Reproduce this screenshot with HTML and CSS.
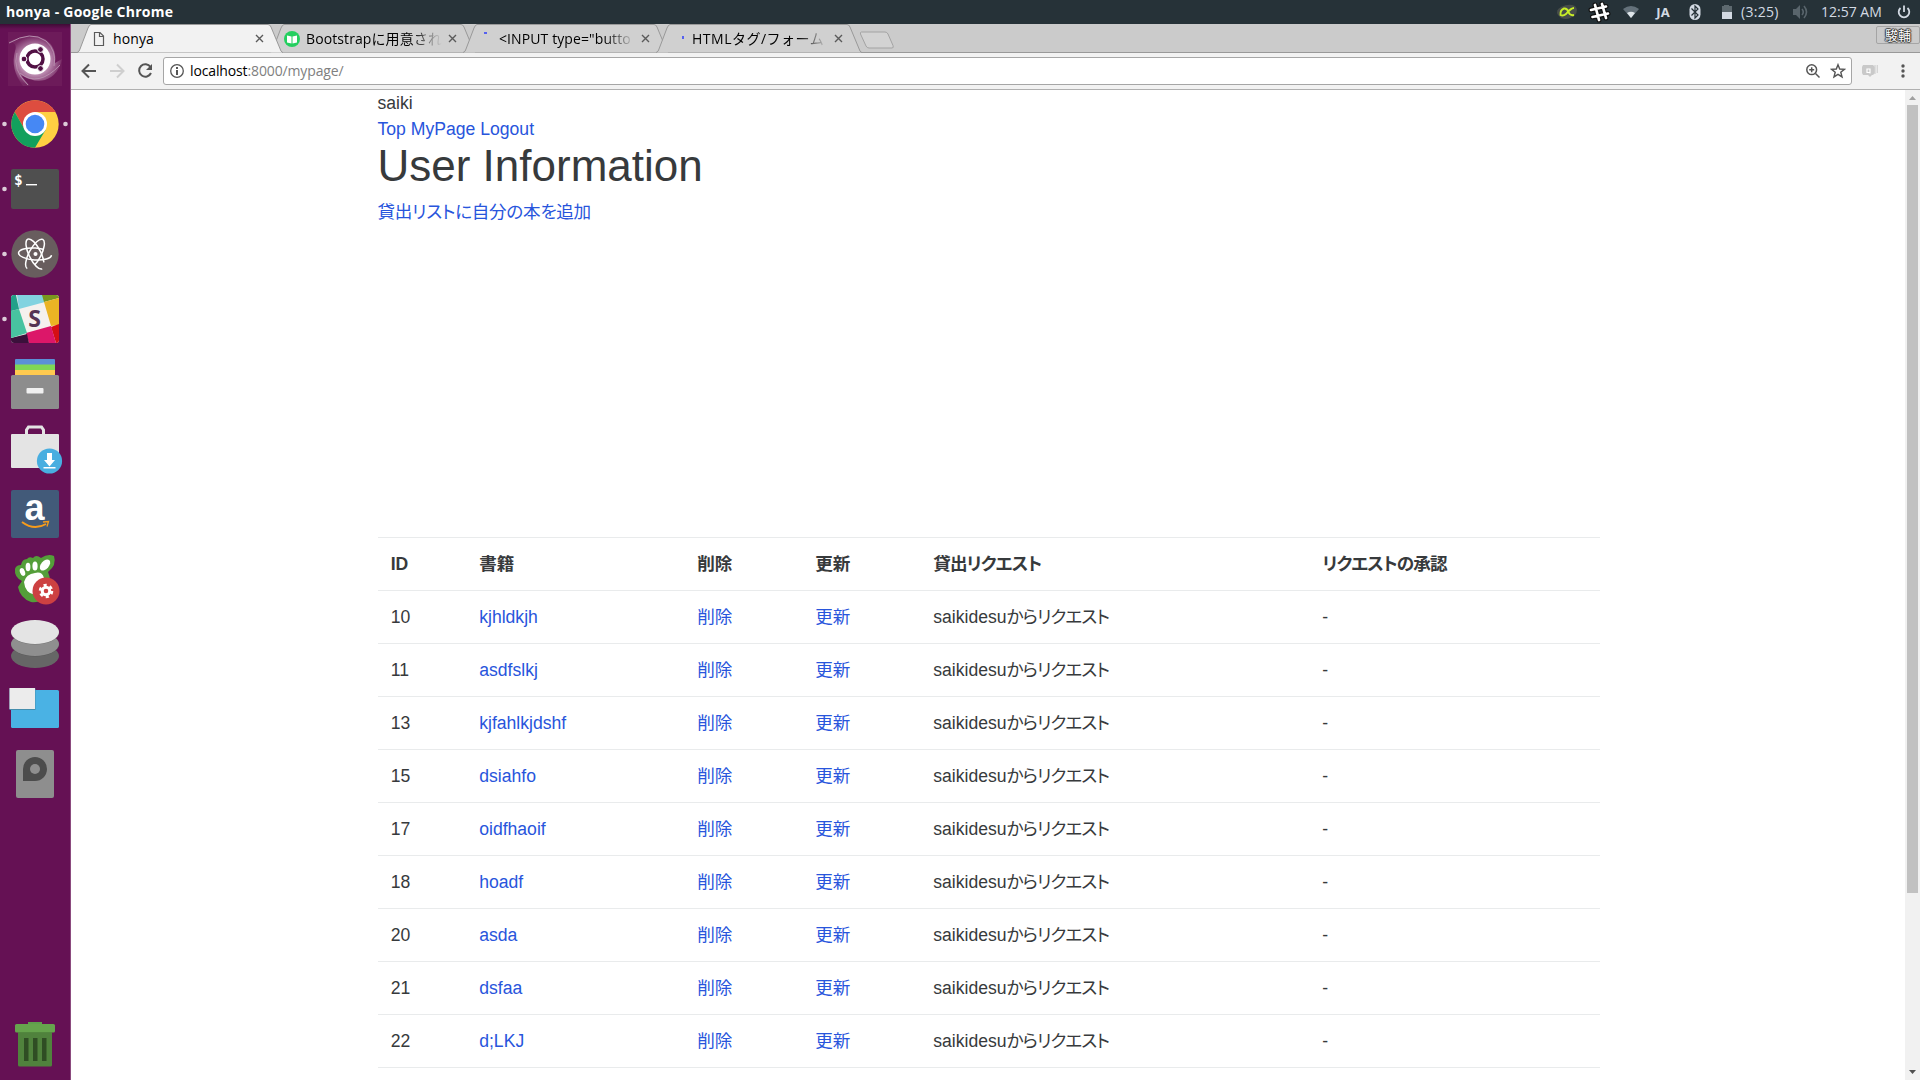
FILE: index.html
```html
<!DOCTYPE html>
<html lang="ja">
<head>
<meta charset="utf-8">
<title>honya</title>
<link rel="stylesheet" href="styles.css">
</head>
<body>
<header class="panel">
  <div class="window-title">honya - Google Chrome</div>
  <div class="indicators">
    <svg class="slot" viewBox="0 0 32 24"><path d="M7 15Q4 10 10 7Q18 3 24 6Q28 10 24 15Q17 21 10 18Z" fill="#474d49"/><path d="M23 8Q20 8 15 14Q12 16.500 9.500 15Q9 10 13 8.500Q16 8 17.500 12Q19 16 23 15" fill="none" stroke="#c8ee28" stroke-width="1.900"/></svg>
    <svg class="slot" viewBox="0 0 32 24"><g fill="none" stroke-linecap="round"><path d="M12 5L16 20M19 4L23 18M8 10L23 6.500M9.500 17L25 13.500" stroke="#111" stroke-width="5"/><path d="M12 5L16 20M19 4L23 18M8 10L23 6.500M9.500 17L25 13.500" stroke="#fff" stroke-width="2.700"/></g></svg>
    <svg class="slot" viewBox="0 0 32 24"><path d="M8 9Q16 3 24 9L16 18Z" fill="#64717a"/><path d="M12 13Q16 10.500 20 13L16 18Z" fill="#dfe6ea"/></svg>
    <div class="slot lang">JA</div>
    <svg class="slot" viewBox="0 0 32 24"><rect x="10.500" y="4" width="11" height="16" rx="5.500" fill="#d3dae3"/><path d="M12.500 8.500L19 15L16 18V6L19 9L12.500 15.500" fill="none" stroke="#263238" stroke-width="1.200"/></svg>
    <svg class="slot battery" viewBox="0 0 31 24"><path d="M13 5h5v1h3v6H11V6h2z" fill="#5d696f"/><path d="M11 12h10v7H11z" fill="#d3dae3"/></svg>
    <div class="remaining">(3:25)</div>
    <svg class="slot" viewBox="0 0 32 24"><path d="M9 9h3l4-4v14l-4-4H9z" fill="#59656c"/><path d="M18 9q2.500 3 0 6M20 6q5 6 0 12" fill="none" stroke="#59656c" stroke-width="1.600"/></svg>
    <div class="clock">12:57 AM</div>
    <svg class="slot" viewBox="0 0 32 24"><path d="M12.500 8A5.300 5.300 0 1 0 19.500 8M16 5.500V12" fill="none" stroke="#d3dae3" stroke-width="1.800"/></svg>
  </div>
</header>
<div class="desktop">
  <nav class="launcher">
    <svg viewBox="0 0 71 65"><defs><radialGradient id="dash"><stop offset=".5" stop-color="#c59abb"/><stop offset="1" stop-color="#762863"/></radialGradient></defs><rect x="8" y="5" width="54" height="54" fill="#6d1b5a"/><path d="M8 15Q30 5 45 12Q57 20 55 36L62 32Q59 48 45 53Q34 56 21 48Q25 54 30 59H23Q10 42 15 24Q18 15 8 15Z" fill="url(#dash)"/><path d="M9 16Q31 3 46 14Q57 24 54 39M17 26Q12 43 28 58M20 46Q38 61 60 38" fill="none" stroke="#b78eae"/><circle cx="35" cy="32" r="15.500" fill="#fff"/><circle cx="35" cy="32" r="8" fill="none" stroke="#511044" stroke-width="3.500"/><g fill="#511044" stroke="#fff"><circle cx="24" cy="32" r="2.900"/><circle cx="40.500" cy="22.500" r="2.900"/><circle cx="40.500" cy="41.500" r="2.900"/></g></svg>
    <svg viewBox="0 0 71 65"><circle class="run" cx="4.500" cy="32" r="2.300"/><circle class="run" cx="65.500" cy="32" r="2.300"/><circle cx="35" cy="32" r="23.700" fill="#ffd042"/><path d="M14.700 20A23.700 23.700 0 0 1 55.500 20H35L25 38Z" fill="#dd4d3f"/><path d="M14.700 20A23.700 23.700 0 0 0 35 55.700L45.500 38L35 32L25 38Z" fill="#12a05d"/><circle cx="35" cy="32" r="12" fill="#fff"/><circle cx="35" cy="32" r="9.300" fill="#4688f4"/></svg>
    <svg viewBox="0 0 71 65"><circle class="run" cx="4.500" cy="32" r="2.300"/><rect x="11" y="12" width="48" height="40" rx="2" fill="#4f4f4f"/><text class="prompt" x="14" y="28">$</text><path d="M26 27.700h11" stroke="#fff" stroke-width="1.400"/></svg>
    <svg viewBox="0 0 71 65"><circle class="run" cx="4.500" cy="32" r="2.300"/><circle cx="35" cy="32" r="23.700" fill="#685d5e"/><g fill="none" stroke="#fff" stroke-width="1.500"><ellipse cx="35" cy="32" rx="16.500" ry="6" transform="rotate(4 35 32)" stroke-dasharray="63 12"/><ellipse cx="35" cy="32" rx="16.500" ry="6" transform="rotate(64 35 32)" stroke-dasharray="67 8"/><ellipse cx="35" cy="32" rx="16.500" ry="6" transform="rotate(118 35 32)" stroke-dasharray="65 10"/></g><circle cx="35.500" cy="32" r="2" fill="#fff"/></svg>
    <svg viewBox="0 0 71 65"><defs><clipPath id="tile"><rect x="11" y="8" width="48" height="48" rx="3"/></clipPath></defs><circle class="run" cx="4.500" cy="32" r="2.300"/><g clip-path="url(#tile)"><path d="M11 8h48v48H11z" fill="#f5f1ee"/><path d="M17 8h26l2 7-26 7z" fill="#82d3e0"/><path d="M42 8h17v3l-15 4z" fill="#79971e"/><path d="M44 15l15-4v27l-8 1z" fill="#ebb424"/><path d="M51 40l8-3v19h-3z" fill="#d50e15"/><path d="M26 46l25-7 5 17H29z" fill="#dc1769"/><path d="M11 51l16-4 2 9H11z" fill="#3b103b"/><path d="M11 24l8-2 8 24-16 5z" fill="#48c3a0"/><path d="M11 8h5l3 14-8 2z" fill="#21a189"/></g><text class="slack-letter" x="34.500" y="40">S</text></svg>
    <svg viewBox="0 0 71 65"><rect x="15" y="7" width="40" height="10" rx="1" fill="#5b90d7"/><path d="M15 12.500h40V18H15z" fill="#80d755"/><path d="M15 18h40v6H15z" fill="#ffca50"/><rect x="11" y="23" width="48" height="34" rx="1.500" fill="#8d8d8d"/><rect x="26.500" y="36" width="17" height="5.500" rx="1" fill="#f0f0f0"/></svg>
    <svg viewBox="0 0 71 65"><path d="M26.500 19v-6l2-3h13l2 3v6" fill="none" stroke="#e4e4e4" stroke-width="3"/><rect x="11" y="17" width="48" height="34" rx="1" fill="#e4e4e4"/><circle cx="49.500" cy="44" r="12.600" fill="#48aee0"/><path d="M47 36h5v7h3l-5.500 6.500L44 43h3zM43.500 50h12v1.500h-12z" fill="#fff"/></svg>
    <svg viewBox="0 0 71 65"><rect x="11" y="8" width="48" height="48" rx="2" fill="#425a79"/><text class="amazon-letter" x="34.500" y="38">a</text><path d="M22 40Q34 49 46 42" fill="none" stroke="#f79c1b" stroke-width="2"/><path d="M43 40l5.500-.5-1.500 5" fill="none" stroke="#f79c1b" stroke-width="1.300"/></svg>
    <svg viewBox="0 0 71 65"><path d="M22 34Q14 30 15 22Q16 18 21 18Q22 12 27 12Q29 9 33 11Q36 7 41 11Q48 6 54 9Q57 18 48 25Q52 34 48 45Q42 57 31 55Q20 51 18 40Z" fill="#549e39"/><g fill="#fff"><path d="M24 35Q26 27 35 26Q42 24 44 31Q42 34 38 36Q34 42 35 48Q25 46 24 35Z"/><ellipse cx="22.500" cy="25" rx="2.500" ry="4" transform="rotate(-20 22.500 25)"/><ellipse cx="28" cy="20" rx="2.400" ry="4.200"/><ellipse cx="35" cy="19" rx="2.600" ry="4.500"/><ellipse cx="45" cy="18" rx="4" ry="6.500" transform="rotate(40 45 18)"/></g><circle cx="46" cy="44" r="13.500" fill="#cd4142"/><circle cx="46" cy="44" r="3.800" fill="none" stroke="#fff" stroke-width="3"/><circle cx="46" cy="44" r="6" fill="none" stroke="#fff" stroke-width="2.500" stroke-dasharray="3.140 3.140"/></svg>
    <svg viewBox="0 0 71 65"><ellipse cx="35" cy="44" rx="24" ry="12" fill="#666"/><ellipse cx="35" cy="32.500" rx="24" ry="12" fill="#5b5b5b"/><ellipse cx="35" cy="32" rx="24" ry="12" fill="#8f8f8f"/><ellipse cx="35" cy="20.500" rx="24" ry="12" fill="#777"/><ellipse cx="35" cy="20" rx="24" ry="12" fill="#e4e4e4"/></svg>
    <svg viewBox="0 0 71 65"><rect x="11" y="13" width="48" height="38" rx="1.500" fill="#4ab2e4"/><rect x="9.500" y="11.500" width="26" height="21.500" fill="#458ead"/><rect x="9.500" y="11" width="25.500" height="21" fill="#ececec"/></svg>
    <svg viewBox="0 0 71 65"><rect x="16" y="8" width="38" height="48" rx="2" fill="#8e8e8e"/><path d="M23 39V27a12 12 0 1 1 12 12z" fill="#4c4c4c"/><circle cx="35" cy="27" r="5" fill="#8e8e8e"/></svg>
    <svg class="trash" viewBox="0 0 71 65"><path d="M28 7h14v4H28z" fill="#5f9e4c"/><path d="M18 16h34v34q0 1.500-1.500 1.500h-31Q18 51.500 18 50z" fill="#50823d"/><path d="M18 16h34v2H18z" fill="#3f6b31"/><rect x="15" y="9" width="40" height="8.500" rx="1.500" fill="#66a44d"/><path d="M24 23h4.500v23H24zM33 23h4.500v23H33zM42 23h4.500v23H42z" fill="#2f4d24"/></svg>
  </nav>
  <main class="browser">
    <div class="tabstrip">
      <div class="tab active">
        <svg class="shape" viewBox="0 0 206 29"><path d="M0 28.500L1 28Q2 28 3 25L11 4Q12.500.500 14 .500H191Q193 .500 194 3L204 27Q205 28.500 206 28.500"/></svg>
        <svg class="favicon" viewBox="0 0 16 16"><path d="M3.500 1.500H9l3.500 3.500v9.500h-9zM8.500 1.500v4h4" fill="none" stroke="#5a5a5a" stroke-width="1.200"/></svg>
        <span class="label">honya</span>
        <svg class="close" viewBox="0 0 9 9"><path d="M1 1l7 7M8 1l-7 7"/></svg>
      </div>
      <div class="tab">
        <svg class="shape" viewBox="0 0 206 29"><path d="M0 28.500L1 28Q2 28 3 25L11 4Q12.500.500 14 .500H191Q193 .500 194 3L204 27Q205 28.500 206 28.500"/></svg>
        <svg class="favicon" viewBox="0 0 16 16"><circle cx="8" cy="8" r="8" fill="#24cf5f"/><path d="M3 4.500l4.500 1v7L3 11.500zM13 4.500l-4.500 1v7l4.500-1z" fill="#fff"/></svg>
        <span class="label fade">Bootstrapに用意され</span>
        <svg class="close" viewBox="0 0 9 9"><path d="M1 1l7 7M8 1l-7 7"/></svg>
      </div>
      <div class="tab">
        <svg class="shape" viewBox="0 0 206 29"><path d="M0 28.500L1 28Q2 28 3 25L11 4Q12.500.500 14 .500H191Q193 .500 194 3L204 27Q205 28.500 206 28.500"/></svg>
        <svg class="favicon" viewBox="0 0 16 16"><path d="M7 1h3v2H7z" fill="#5661ef"/></svg>
        <span class="label fade input-tab">&lt;INPUT type="butto</span>
        <svg class="close" viewBox="0 0 9 9"><path d="M1 1l7 7M8 1l-7 7"/></svg>
      </div>
      <div class="tab">
        <svg class="shape" viewBox="0 0 206 29"><path d="M0 28.500L1 28Q2 28 3 25L11 4Q12.500.500 14 .500H191Q193 .500 194 3L204 27Q205 28.500 206 28.500"/></svg>
        <svg class="favicon" viewBox="0 0 16 16"><path d="M12 5h2v3h-2z" fill="#5661ef"/></svg>
        <span class="label fade form-tab">HTMLタグ/フォーム</span>
        <svg class="close" viewBox="0 0 9 9"><path d="M1 1l7 7M8 1l-7 7"/></svg>
      </div>
      <svg class="new-tab" viewBox="0 0 36 18"><path d="M2.500 1H26Q28 1 29 3L34 14.500Q35 17 33 17H10Q8 17 7 15L1.500 3Q1 1 2.500 1Z" fill="#d3d3d3" stroke="#a3a3a3"/></svg>
      <div class="profile">駿輔</div>
    </div>
    <div class="toolbar">
      <svg class="nav-icon" viewBox="0 0 28 28"><path d="M21 14H8M14 7.500L7.500 14l6.500 6.500" stroke="#555"/></svg>
      <svg class="nav-icon" viewBox="0 0 28 28"><path d="M7 14h13M14 7.500l6.500 6.500-6.500 6.500" stroke="#cfcfcf"/></svg>
      <svg class="nav-icon reload" viewBox="0 0 28 28"><path d="M19.500 10A6.200 6.200 0 1 0 20 16" stroke="#555"/><path d="M21 7v6h-6z" fill="#555"/></svg>
      <div class="omnibox">
        <svg class="info" viewBox="0 0 16 16"><circle cx="8" cy="8" r="6.300" fill="none" stroke="#555" stroke-width="1.300"/><path d="M7 4h2v2H7zM7 7h2v5H7z" fill="#555"/></svg>
        <div class="url">localhost<span>:8000/mypage/</span></div>
        <svg class="box-icon" viewBox="0 0 16 16"><g fill="none" stroke="#555" stroke-width="1.500"><circle cx="6.700" cy="6.700" r="4.900"/><path d="M10.500 10.500l4 4M4.200 6.700h5M6.700 4.200v5"/></g></svg>
        <svg class="box-icon" viewBox="0 0 16 16"><path d="M8 1.700l1.700 4.300 4.700.3-3.600 3 1.200 4.600-4-2.600-4 2.600 1.200-4.600-3.600-3 4.700-.3z" fill="none" stroke="#555" stroke-width="1.400"/></svg>
      </div>
      <svg class="extension" viewBox="0 0 18 16"><path d="M2 2h10l2 2v6l-2 2h-1l-2 2-2-2H2L1 10V4z" fill="#c9c9c9"/><path d="M14 2v9M16.300 2v8" stroke="#d3d3d3" stroke-width="1.300"/><path d="M9 5.500v5M8.500 6H6v3.500h2.500" fill="none" stroke="#fff" stroke-width="1.200"/></svg>
      <svg class="menu" viewBox="0 0 4 16"><circle cx="2" cy="3" r="1.700"/><circle cx="2" cy="8" r="1.700"/><circle cx="2" cy="13" r="1.700"/></svg>
    </div>
    <div class="viewport">
      <div class="page">
        <div>saiki</div>
        <div><a>Top</a> <a>MyPage</a> <a>Logout</a></div>
        <h1>User Information</h1>
        <div class="add"><a>貸出リストに自分の本を追加</a></div>
        <table>
          <colgroup><col class="c-id"><col class="c-book"><col class="c-act"><col class="c-act"><col class="c-req"><col></colgroup>
          <tr><th>ID</th><th>書籍</th><th>削除</th><th>更新</th><th class="tight">貸出リクエスト</th><th class="tight">リクエストの承認</th></tr>
          <tr><td>10</td><td><a>kjhldkjh</a></td><td><a>削除</a></td><td><a>更新</a></td><td>saikidesu<span class="tight">からリクエスト</span></td><td>-</td></tr>
          <tr><td>11</td><td><a>asdfslkj</a></td><td><a>削除</a></td><td><a>更新</a></td><td>saikidesu<span class="tight">からリクエスト</span></td><td>-</td></tr>
          <tr><td>13</td><td><a>kjfahlkjdshf</a></td><td><a>削除</a></td><td><a>更新</a></td><td>saikidesu<span class="tight">からリクエスト</span></td><td>-</td></tr>
          <tr><td>15</td><td><a>dsiahfo</a></td><td><a>削除</a></td><td><a>更新</a></td><td>saikidesu<span class="tight">からリクエスト</span></td><td>-</td></tr>
          <tr><td>17</td><td><a>oidfhaoif</a></td><td><a>削除</a></td><td><a>更新</a></td><td>saikidesu<span class="tight">からリクエスト</span></td><td>-</td></tr>
          <tr><td>18</td><td><a>hoadf</a></td><td><a>削除</a></td><td><a>更新</a></td><td>saikidesu<span class="tight">からリクエスト</span></td><td>-</td></tr>
          <tr><td>20</td><td><a>asda</a></td><td><a>削除</a></td><td><a>更新</a></td><td>saikidesu<span class="tight">からリクエスト</span></td><td>-</td></tr>
          <tr><td>21</td><td><a>dsfaa</a></td><td><a>削除</a></td><td><a>更新</a></td><td>saikidesu<span class="tight">からリクエスト</span></td><td>-</td></tr>
          <tr><td>22</td><td><a>d;LKJ</a></td><td><a>削除</a></td><td><a>更新</a></td><td>saikidesu<span class="tight">からリクエスト</span></td><td>-</td></tr>
          <tr><td colspan="6"></td></tr>
        </table>
      </div>
      <div class="scrollbar">
        <svg viewBox="0 0 15 15"><path d="M4 10h7L7.500 6z" fill="#a0a0a0"/></svg>
        <div class="thumb"></div>
        <svg class="down" viewBox="0 0 15 15"><path d="M4 5h7L7.500 9z" fill="#505050"/></svg>
      </div>
    </div>
  </main>
</div>
</body>
</html>
```
FILE: styles.css
```css
* { box-sizing: border-box; }
body {
  margin: 0;
  width: 1920px;
  height: 1080px;
  overflow: hidden;
  display: flex;
  flex-direction: column;
  font-family: "Open Sans", "Noto Sans CJK JP", sans-serif;
}
svg { display: block; flex: none; }

.panel {
  height: 24px;
  flex: none;
  display: flex;
  justify-content: space-between;
  background: #263238;
  color: #d3dae3;
  font-size: 14px;
  line-height: 24px;
  white-space: nowrap;
}
.window-title { padding-left: 6px; color: #fff; font-weight: 700; font-size: 14px; letter-spacing: .25px; }
.indicators { display: flex; }
.slot { width: 32px; height: 24px; }
.battery { width: 31px; }
.lang { text-align: center; font: 700 13px/24px "Noto Sans", sans-serif; }
.remaining { width: 42px; margin-left: -1px; margin-right: 1px; letter-spacing: .3px; }
.clock { width: 72px; padding-left: 5px; }

.desktop { flex: 1; min-height: 0; display: flex; }
.launcher {
  width: 71px;
  flex: none;
  display: flex;
  flex-direction: column;
  padding-top: 3px;
  background: linear-gradient(#3f0c36, transparent 5px), #651154;
  border-right: 1px solid #8b4a7e;
}
.launcher svg { width: 71px; height: 65px; }
.launcher .trash { margin-top: auto; }
.run { fill: #dccbd8; }
.prompt { font: 700 14.5px "DejaVu Sans Mono", monospace; fill: #fff; }
.slack-letter { font: 700 23px "Open Sans", sans-serif; fill: #543454; text-anchor: middle; }
.amazon-letter { font: 700 36px "Liberation Sans", sans-serif; fill: #fff; text-anchor: middle; }

.browser { flex: 1; min-width: 0; display: flex; flex-direction: column; }
.tabstrip {
  height: 29px;
  flex: none;
  display: flex;
  padding-left: 6px;
  background: linear-gradient(#cbcbcb 28px, #999 28px);
}
.tab {
  position: relative;
  width: 206px;
  height: 29px;
  margin-right: -13px;
  padding-left: 14px;
  display: flex;
  align-items: center;
}
.shape { position: absolute; left: 0; top: 0; width: 206px; height: 29px; fill: #d0d0d0; stroke: #999; }
.active { z-index: 1; }
.active .shape { fill: #f2f2f2; }
.favicon { position: relative; width: 16px; height: 16px; }
.label {
  position: relative;
  width: 136px;
  margin-left: 6px;
  overflow: hidden;
  white-space: nowrap;
  color: #000;
  font-size: 14px;
  line-height: 24px;
  letter-spacing: .1px;
}
.fade { -webkit-mask-image: linear-gradient(90deg, #000 105px, transparent 136px); mask-image: linear-gradient(90deg, #000 105px, transparent 136px); }
.input-tab { letter-spacing: .1px; }
.form-tab { letter-spacing: .5px; }
.close { position: relative; width: 9px; height: 9px; margin-left: 6px; fill: none; stroke: #5a5a5a; stroke-width: 1.4; }
.new-tab { width: 36px; height: 18px; margin: 7px 0 0 10px; }
.profile {
  width: 44px;
  height: 18px;
  margin: 2px 0 0 auto;
  border: 1px solid #a5a5a5;
  border-radius: 2px;
  text-align: center;
  font: 13px/16px "Noto Sans CJK JP", sans-serif;
  color: #fff;
  text-shadow: 0 0 1px #333, 1px 0 1px #333, -1px 0 1px #333, 0 1px 1px #333, 0 -1px 1px #333;
}

.toolbar {
  height: 37px;
  flex: none;
  display: flex;
  align-items: center;
  padding: 0 0 1px 4px;
  background: #f2f2f2;
  border-bottom: 1px solid #b0b0b0;
}
.nav-icon { width: 28px; height: 28px; fill: none; stroke-width: 2; }
.omnibox {
  width: 1689px;
  height: 28px;
  margin-left: 4px;
  display: flex;
  align-items: center;
  padding: 0 5px 0 5px;
  background: #fff;
  border: 1px solid #a6a6a6;
  border-radius: 3px;
}
.info { width: 16px; height: 16px; }
.url { flex: 1; margin-left: 5px; font-size: 14px; line-height: 24px; letter-spacing: -.13px; color: #000; }
.url span { color: #808080; }
.box-icon { width: 16px; height: 16px; margin-left: 9px; }
.extension { width: 18px; height: 16px; margin-left: 9px; }
.menu { width: 4px; height: 16px; margin-left: 22px; fill: #555; }

.viewport { flex: 1; min-height: 0; display: flex; justify-content: space-between; overflow: hidden; background: #fff; }
.page {
  width: 1222px;
  margin-left: 306.5px;
  color: #373a3c;
  font: 17.6px/26.4px "Liberation Sans", "Noto Sans CJK JP", sans-serif;
  font-feature-settings: "palt";
}
.page a { color: #2855dc; }
h1 { margin: -1px 0 8.8px; font-size: 44px; font-weight: 400; line-height: 48.4px; }
.add { height: 338px; letter-spacing: -.28px; }
table { width: 1222px; border-collapse: separate; border-spacing: 0; table-layout: fixed; }
.c-id { width: 88.500px; }
.c-book { width: 218px; }
.c-act { width: 118px; }
.c-req { width: 389px; }
th, td { height: 53px; padding: 0 13.2px; border-top: 1px solid #e9ebec; text-align: left; vertical-align: middle; }
.tight { letter-spacing: -.9px; }

.scrollbar { width: 15px; display: flex; flex-direction: column; background: #f1f1f1; }
.scrollbar svg { width: 15px; height: 15px; }
.thumb { width: 11px; height: 788px; margin-left: 2px; background: #c1c1c1; }
.scrollbar .down { margin-top: auto; }
```
